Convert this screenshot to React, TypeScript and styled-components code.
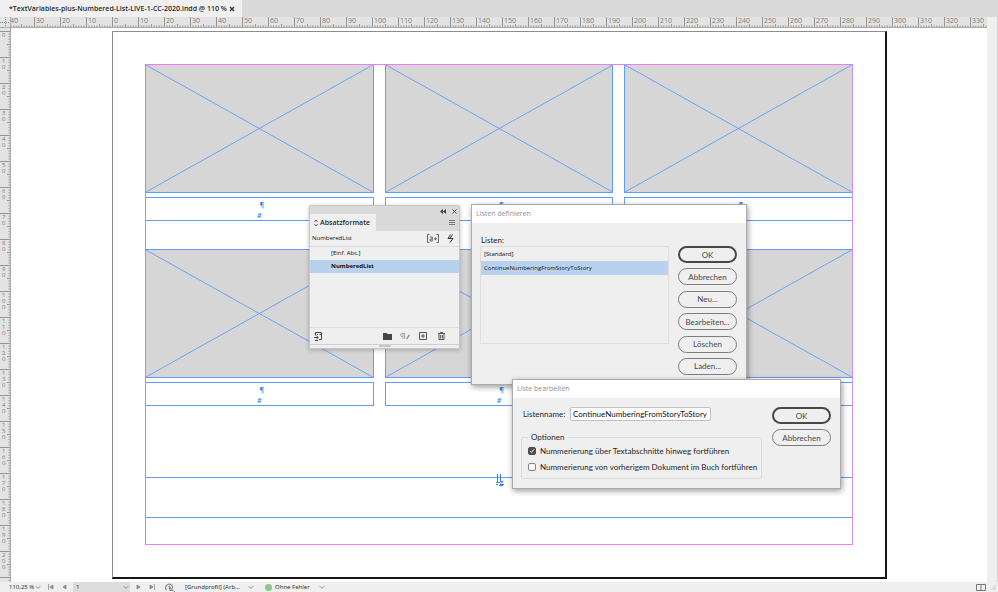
import React, { useId, useState } from "react";
import styled, { createGlobalStyle, css } from "styled-components";

const dialogFont = 'Lato, "Noto Sans", sans-serif';
const uiFont = '"Noto Sans", "Open Sans", sans-serif';
const chromeFont = '"Open Sans", "Noto Sans", sans-serif';
const frameBlue = "#5c9ffb";

const GlobalStyle = createGlobalStyle`
  *, *::before, *::after { box-sizing: border-box; }
  html, body, #root { height: 100%; }
  body { margin: 0; overflow: hidden; background: #fff; font-family: ${uiFont}; color: #262626; }
  button, input, select { font: inherit; color: inherit; margin: 0; }
  button { padding: 0; border: 0; background: none; cursor: default; }
  svg { display: block; }
`;

/* ---------- Application frame ---------- */

const Window = styled.div`
  display: grid;
  grid-template-rows: 17px minmax(0, 1fr) 10px;
  height: 100vh;
`;

const TabBar = styled.header`
  display: flex;
  background: #dadada;
`;

const DocumentTab = styled.div`
  display: flex;
  align-items: center;
  padding: 1px 5px 0 9px;
  background: #f0f0f0;
  font: 600 7px/14px ${chromeFont};
  white-space: nowrap;
`;

const IconButton = styled.button<{ $size?: number }>`
  display: grid;
  place-items: center;
  flex: none;
  width: ${(p) => p.$size ?? 10}px;
  height: ${(p) => p.$size ?? 10}px;
  color: #333;
`;

const Workspace = styled.div`
  display: grid;
  grid-template: 11px minmax(0, 1fr) / 11px minmax(0, 1fr) 11px;
  min-height: 0;
`;

const RulerCorner = styled.div`
  background: #e3e3e3;
  border-right: 1px solid #aaa;
  border-bottom: 1px solid #aaa;
`;

const HorizontalRuler = styled.div`
  display: flex;
  overflow: hidden;
  background: #e3e3e3;
  border-bottom: 1px solid #aaa;
  & > :first-child { margin-left: -3px; }
`;

const VerticalRuler = styled.div`
  display: flex;
  flex-direction: column;
  overflow: hidden;
  padding-top: 3px;
  background: #e3e3e3;
  border-right: 1px solid #aaa;
`;

const RulerCell = styled.div<{ $vertical?: boolean }>`
  display: grid;
  flex: none;
  color: #7d7d7d;
  font: 7px/8px ${chromeFont};
  & > * { grid-area: 1 / 1; }
  ${(p) => (p.$vertical ? css`width: 10px; height: 26px;` : css`width: 26px; height: 10px;`)}
`;

const RulerLabel = styled.span<{ $vertical?: boolean }>`
  ${(p) =>
    p.$vertical
      ? css`width: 6px; padding: 1px 0 0 2px; font-size: 6px; line-height: 6px; word-break: break-all;`
      : css`padding-left: 2px;`}
`;

const Scrollbar = styled.div`
  grid-column: 3;
  grid-row: 1 / 3;
  background: #efefef;
  border-right: 1px solid #d4d4d4;
`;

const Canvas = styled.main`
  position: relative;
  overflow: hidden;
  background: #fff;
`;

/* ---------- Document page ---------- */

const Sheet = styled.section`
  width: 775px;
  height: 548px;
  margin: 3px 0 0 101px;
  padding: 32px 32px 0;
  border: solid #8e8e8e;
  border-width: 1px 2px 2px 1px;
  border-right-color: #161616;
  border-bottom-color: #161616;
`;

const Margins = styled.div`
  position: relative;
  height: 481px;
  &::after {
    content: "";
    position: absolute;
    inset: 0;
    border: 1px solid #f07cf0;
    border-left-color: #bf80ff;
    border-right-color: #cf8dff;
    pointer-events: none;
  }
`;

const FrameGrid = styled.div`
  display: grid;
  grid-template-columns: repeat(3, 1fr);
  gap: 28px 11px;
`;

const FrameGroup = styled.figure`
  display: grid;
  gap: 4px;
  margin: 0;
`;

const PictureFrame = styled.div`
  height: 129px;
  background: #d6d6d6;
  border: 1px solid ${frameBlue};
  & > svg { width: 100%; height: 100%; }
`;

const CaptionFrame = styled.figcaption`
  height: 24px;
  padding-top: 1px;
  border: 1px solid ${frameBlue};
  color: #2f83f3;
  font: 600 7px/11px ${chromeFont};
  text-align: center;
`;

const Pilcrow = styled.div`
  padding-left: 5px;
`;

const NumberMark = styled.div`
  font-style: italic;
`;

const StoryFrame = styled.div`
  display: grid;
  justify-content: center;
  height: 41px;
  margin-top: 71px;
  border: 1px solid ${frameBlue};
`;

const AnchorMark = styled.svg`
  margin-top: -4px;
`;

/* ---------- Floating windows ---------- */

const FloatingWindow = styled.section<{ $x: number; $y: number; $width: number }>`
  position: absolute;
  left: ${(p) => p.$x}px;
  top: ${(p) => p.$y}px;
  width: ${(p) => p.$width}px;
  background: #efefef;
`;

const Panel = styled(FloatingWindow)`
  border: 1px solid #c6c6c6;
  border-radius: 2px 2px 0 0;
  box-shadow: 0 1px 4px rgba(0, 0, 0, 0.25);
  color: #111;
  font: 6px/13px ${chromeFont};
`;

const PanelTop = styled.div`
  display: flex;
  justify-content: flex-end;
  gap: 1px;
  height: 8px;
  background: #dadada;
`;

const PanelTabs = styled.div`
  display: flex;
  align-items: center;
  justify-content: space-between;
  height: 17px;
  padding-right: 2px;
  background: #dadada;
`;

const PanelTab = styled.div`
  display: flex;
  align-items: center;
  gap: 2px;
  height: 100%;
  padding: 0 6px 0 4px;
  background: #efefef;
  color: #262626;
  font-size: 7px;
  font-weight: 600;
`;

const CurrentStyle = styled.div`
  display: flex;
  align-items: center;
  gap: 3px;
  height: 15px;
  padding: 0 2px;
  & > span { flex: 1; }
`;

const StyleList = styled.div`
  height: 82px;
  border: solid #dcdcdc;
  border-width: 1px 0;
`;

const StyleRow = styled.button<{ $selected?: boolean }>`
  display: block;
  width: 100%;
  height: 13px;
  padding-left: 21px;
  text-align: left;
  line-height: 13px;
  font-weight: ${(p) => (p.$selected ? 700 : 400)};
  background: ${(p) => (p.$selected ? "#b8d2ee" : "transparent")};
`;

const PanelFooter = styled.div`
  display: flex;
  align-items: center;
  gap: 8px;
  height: 16px;
  padding: 0 13px 0 3px;
  & > :first-child { margin-right: auto; }
`;

const Grip = styled.div`
  display: grid;
  justify-content: center;
  grid-template-columns: 12px;
  height: 4px;
  border-top: 1px solid #cfcfcf;
  &::after { content: ""; height: 2px; background: #c8c8c8; }
`;

const Dialog = styled(FloatingWindow)`
  border: 1px solid #ababab;
  box-shadow: 1px 2px 6px rgba(0, 0, 0, 0.4);
  font: 8px/12px ${dialogFont};
`;

const DialogTitle = styled.h2`
  margin: 0;
  padding-left: 4px;
  background: #fff;
  color: #929292;
  font: 400 7px/18px ${chromeFont};
`;

const DialogBody = styled.div<{ $pad: string }>`
  display: flex;
  justify-content: space-between;
  padding: ${(p) => p.$pad};
`;

const ButtonColumn = styled.div<{ $height: number }>`
  display: flex;
  flex-direction: column;
  justify-content: space-between;
  height: ${(p) => p.$height}px;
`;

const DefineButtons = styled(ButtonColumn)`
  margin-top: 12px;
`;

const PillButton = styled.button<{ $primary?: boolean }>`
  width: 59px;
  height: 17px;
  border-radius: 9px;
  border: ${(p) => (p.$primary ? "2px solid #484848" : "1px solid #7c7c7c")};
  color: #484848;
  line-height: 12px;
  text-align: center;
`;

const ListLabel = styled.div`
  padding-left: 1px;
`;

const ListBox = styled.div`
  width: 189px;
  height: 98px;
  border: 1px solid #dedede;
`;

const ListRow = styled.button<{ $selected?: boolean }>`
  display: block;
  width: 100%;
  height: 14px;
  padding-left: 3px;
  text-align: left;
  font: 6px/14px ${chromeFont};
  color: #111;
  background: ${(p) => (p.$selected ? "#b8d2ee" : "transparent")};
`;

const FieldRow = styled.div`
  display: flex;
  align-items: center;
  gap: 4px;
  padding-left: 2px;
  & > label { width: 43px; }
`;

const TextInput = styled.input`
  width: 141px;
  height: 14px;
  padding: 0 2px;
  border: 1px solid #c2c2c2;
  border-radius: 2px;
  background: #fff;
  color: #111;
  outline: none;
`;

const OptionGroup = styled.fieldset`
  width: 241px;
  height: 48px;
  margin: 10px 0 0;
  padding: 0 0 0 6px;
  border: 1px solid #dcdcdc;
  border-radius: 2px;
  & > legend { padding: 0 3px; line-height: 12px; }
`;

const CheckLabel = styled.label`
  display: flex;
  align-items: center;
  gap: 4px;
  height: 16px;
  line-height: 12px;
  white-space: nowrap;
`;

const CheckBox = styled.input`
  appearance: none;
  width: 8px;
  height: 8px;
  border: 1px solid #858585;
  border-radius: 2px;
  background: #fafafa;
  &:checked {
    border-color: #4f4f4f;
    background: #4f4f4f
      url("data:image/svg+xml,%3Csvg xmlns='http://www.w3.org/2000/svg' viewBox='0 0 6 6'%3E%3Cpath d='M1 3l1.5 1.5L5 1.3' fill='none' stroke='white'/%3E%3C/svg%3E")
      center / 6px 6px;
  }
`;

/* ---------- Status bar ---------- */

const StatusBar = styled.footer`
  display: flex;
  align-items: center;
  gap: 5px;
  padding-left: 9px;
  background: #efefef;
  font: 6px/10px ${uiFont};
  color: #333;
`;

const Picker = styled.div<{ $width: number; $filled?: boolean }>`
  display: grid;
  grid-template-columns: minmax(0, 1fr) 7px;
  align-items: center;
  width: ${(p) => p.$width}px;
  height: 10px;
  background: ${(p) => (p.$filled ? "#dcdcdc" : "transparent")};
  & > select {
    grid-area: 1 / 1 / 2 / 3;
    appearance: none;
    width: 100%;
    height: 10px;
    padding: 0 0 0 ${(p) => (p.$filled ? 3 : 0)}px;
    border: 0;
    background: none;
    outline: none;
  }
  & > svg { grid-area: 1 / 2; pointer-events: none; }
`;

const StatusGroup = styled.div`
  display: flex;
  align-items: center;
  gap: 10px;
  padding-left: 4px;
`;

const PreflightStatus = styled.div`
  display: flex;
  align-items: center;
  gap: 3px;
`;

const PreflightDot = styled.span`
  width: 7px;
  height: 7px;
  border-radius: 50%;
  background: #86ca86;
`;

const StatusEnd = styled.div`
  display: flex;
  align-items: center;
  gap: 2px;
  margin-left: auto;
`;

/* ---------- Drawings ---------- */

const Chevron = () => (
  <svg width="6" height="5" viewBox="0 0 6 5" fill="none" stroke="#8a8a8a">
    <path d="M.8 1.2 3 3.4l2.2-2.2" />
  </svg>
);

const Cross = () => (
  <svg width="6" height="6" viewBox="0 0 6 6" stroke="currentColor" strokeWidth="1.4">
    <path d="M1 1l4 4M5 1L1 5" />
  </svg>
);

const StepIcon = ({ back, edge }: { back?: boolean; edge?: boolean }) => (
  <svg width="6" height="6" viewBox="0 0 6 6" fill="#888" stroke="#888" strokeWidth="0.8">
    {back ? <path d="M5 1v4L2 3z" /> : <path d="M1 1v4l3-2z" />}
    {edge && <path d={back ? "M.6 0v6" : "M5.4 0v6"} />}
  </svg>
);

const Ticks = ({ vertical }: { vertical?: boolean }) => {
  const marks = Array.from({ length: 10 }, (_, i) => {
    const at = (i * 2.6 + 0.5).toFixed(1);
    const from = i === 0 ? 0 : i === 5 ? 7 : 8.5;
    return vertical ? `M${from} ${at}H10` : `M${at} ${from}V10`;
  }).join("");
  return (
    <svg width={vertical ? 10 : 26} height={vertical ? 26 : 10} stroke="#8c8c8c" strokeWidth="0.9">
      <path d={marks} />
    </svg>
  );
};

const Diagonals = () => (
  <svg viewBox="0 0 227 127" preserveAspectRatio="none" stroke={frameBlue} strokeWidth="0.9">
    <path d="M0 0 227 127M227 0 0 127" />
  </svg>
);

const horizontalMarks = [40, 30, 20, 10, ...Array.from({ length: 34 }, (_, i) => i * 10)];
const verticalMarks = Array.from({ length: 21 }, (_, i) => i * 10);

/* ---------- Parts ---------- */

const PageFrame = () => (
  <FrameGroup>
    <PictureFrame><Diagonals /></PictureFrame>
    <CaptionFrame>
      <Pilcrow>¶</Pilcrow>
      <NumberMark>#</NumberMark>
    </CaptionFrame>
  </FrameGroup>
);

const ParagraphStyles = () => {
  const [selected, setSelected] = useState("NumberedList");
  return (
    <Panel $x={298} $y={177} $width={151} aria-label="Absatzformate">
      <PanelTop>
        <IconButton aria-label="Reduzieren">
          <svg width="6" height="5" viewBox="0 0 6 5" fill="#444"><path d="M3 0v5L0 2.500zM6 0v5L3 2.500z" /></svg>
        </IconButton>
        <IconButton aria-label="Schließen">
          <svg width="5" height="5" viewBox="0 0 5 5" stroke="#444"><path d="M.5.5l4 4M4.500.5l-4 4" /></svg>
        </IconButton>
      </PanelTop>
      <PanelTabs>
        <PanelTab>
          <svg width="4" height="8" viewBox="0 0 4 8" fill="none" stroke="#444" strokeWidth="0.8"><path d="M.5 3 2 1l1.500 2M.5 5 2 7l1.500-2" /></svg>
          Absatzformate
        </PanelTab>
        <IconButton aria-label="Menü">
          <svg width="6" height="5" viewBox="0 0 6 5" stroke="#777"><path d="M0 .5h6M0 2.500h6M0 4.500h6" /></svg>
        </IconButton>
      </PanelTabs>
      <CurrentStyle>
        <span>{selected}</span>
        <IconButton $size={14} aria-label="Abweichungen anzeigen">
          <svg width="12" height="9" viewBox="0 0 12 9" fill="none" stroke="#555" strokeWidth="0.9">
            <path d="M2.500.5h-2v8h2M9.500.5h2v8h-2M3 3h2.300v4H3.200V5h2.100M7 4.800h3M8.500 3.300v3" />
          </svg>
        </IconButton>
        <IconButton $size={14} aria-label="Schnell anwenden">
          <svg width="7" height="9" viewBox="0 0 7 9" fill="none" stroke="#333"><path d="M3.500.5 1 4.500h5L3 8.500M5.500.5 3 4.500" /></svg>
        </IconButton>
      </CurrentStyle>
      <StyleList>
        {["[Einf. Abs.]", "NumberedList"].map((name) => (
          <StyleRow key={name} $selected={name === selected} aria-pressed={name === selected} onClick={() => setSelected(name)}>
            {name}
          </StyleRow>
        ))}
      </StyleList>
      <PanelFooter>
        <IconButton aria-label="Bibliothek">
          <svg width="9" height="9" viewBox="0 0 9 9" fill="none" stroke="#444">
            <path d="M1.500 3.500v-3h6v7H5M0 5.500h4M2.500 3.800l1.800 1.700-1.800 1.700M5.500 2.500h2M3 2.500h1M1 8.500h3" />
          </svg>
        </IconButton>
        <IconButton aria-label="Neue Gruppe">
          <svg width="9" height="7" viewBox="0 0 9 7" fill="#444"><path d="M0 0h3.500l1 1H9v6H0z" /></svg>
        </IconButton>
        <IconButton aria-label="Abweichungen löschen">
          <svg width="10" height="7" viewBox="0 0 10 7" fill="none" stroke="#999" strokeWidth="0.8">
            <path d="M5 .5H2Q.5.5.5 2T2 3.500h1M3 .5V6M4.600 .5V6" /><path d="M6.500 6 9.500 2" strokeWidth="1.500" />
          </svg>
        </IconButton>
        <IconButton aria-label="Neues Format">
          <svg width="8" height="8" viewBox="0 0 8 8" fill="none" stroke="#555"><path d="M.5.5h7v7h-7zM2 4h4M4 2v4" /></svg>
        </IconButton>
        <IconButton aria-label="Löschen">
          <svg width="7" height="8" viewBox="0 0 7 8" fill="none" stroke="#444" strokeWidth="0.9">
            <path d="M0 1.500h7M2.500 1.500v-1h2v1M1 2v5.500h5V2M2.700 3v3.500M4.300 3v3.500" />
          </svg>
        </IconButton>
      </PanelFooter>
      <Grip />
    </Panel>
  );
};

const DefineLists = () => {
  const [selected, setSelected] = useState("ContinueNumberingFromStoryToStory");
  return (
    <Dialog $x={460} $y={176} $width={276} role="dialog" aria-label="Listen definieren">
      <DialogTitle>Listen definieren</DialogTitle>
      <DialogBody $pad="11px 9px 9px 8px">
        <div>
          <ListLabel>Listen:</ListLabel>
          <ListBox>
            {["[Standard]", "ContinueNumberingFromStoryToStory"].map((name) => (
              <ListRow key={name} $selected={name === selected} aria-pressed={name === selected} onClick={() => setSelected(name)}>
                {name}
              </ListRow>
            ))}
          </ListBox>
        </div>
        <DefineButtons $height={129}>
          <PillButton $primary>OK</PillButton>
          {["Abbrechen", "Neu...", "Bearbeiten...", "Löschen", "Laden..."].map((name) => (
            <PillButton key={name}>{name}</PillButton>
          ))}
        </DefineButtons>
      </DialogBody>
    </Dialog>
  );
};

const EditList = () => {
  const nameId = useId();
  return (
    <Dialog $x={501} $y={351} $width={329} role="dialog" aria-label="Liste bearbeiten">
      <DialogTitle>Liste bearbeiten</DialogTitle>
      <DialogBody $pad="9px 9px 9px 8px">
        <div>
          <FieldRow>
            <label htmlFor={nameId}>Listenname:</label>
            <TextInput id={nameId} defaultValue="ContinueNumberingFromStoryToStory" />
          </FieldRow>
          <OptionGroup>
            <legend>Optionen</legend>
            <CheckLabel>
              <CheckBox type="checkbox" defaultChecked />
              Nummerierung über Textabschnitte hinweg fortführen
            </CheckLabel>
            <CheckLabel>
              <CheckBox type="checkbox" />
              Nummerierung von vorherigem Dokument im Buch fortführen
            </CheckLabel>
          </OptionGroup>
        </div>
        <ButtonColumn $height={39}>
          <PillButton $primary>OK</PillButton>
          <PillButton>Abbrechen</PillButton>
        </ButtonColumn>
      </DialogBody>
    </Dialog>
  );
};

const StatusPicker = ({ label, value, width, filled }: { label: string; value: string; width: number; filled?: boolean }) => (
  <Picker $width={width} $filled={filled}>
    <select aria-label={label}><option>{value}</option></select>
    <Chevron />
  </Picker>
);

export default function App() {
  return (
    <>
      <GlobalStyle />
      <Window>
        <TabBar>
          <DocumentTab>
            *TextVariables-plus-Numbered-List-LIVE-1-CC-2020.indd @ 110 %
            <IconButton aria-label="Dokument schließen"><Cross /></IconButton>
          </DocumentTab>
        </TabBar>
        <Workspace>
          <RulerCorner>
            <svg width="10" height="10" stroke="#8c8c8c" strokeDasharray="1 1"><path d="M5.500 0v10M0 5.500h10" /></svg>
          </RulerCorner>
          <HorizontalRuler>
            {horizontalMarks.map((mark, i) => (
              <RulerCell key={i}>
                <Ticks />
                <RulerLabel>{mark}</RulerLabel>
              </RulerCell>
            ))}
          </HorizontalRuler>
          <Scrollbar />
          <VerticalRuler>
            {verticalMarks.map((mark) => (
              <RulerCell key={mark} $vertical>
                <Ticks vertical />
                <RulerLabel $vertical>{mark}</RulerLabel>
              </RulerCell>
            ))}
            <RulerCell $vertical><Ticks vertical /></RulerCell>
          </VerticalRuler>
          <Canvas>
            <Sheet>
              <Margins>
                <FrameGrid>
                  {Array.from({ length: 6 }, (_, i) => <PageFrame key={i} />)}
                </FrameGrid>
                <StoryFrame>
                  <AnchorMark width="9" height="12" viewBox="0 0 9 12" fill="none" stroke="#2f83f3">
                    <path d="M2.500 0v9M5.500 0v8M1 8.500h4M4 11.500h4M5 7.500h3L5 10.500h4M1 10.500h2" />
                  </AnchorMark>
                </StoryFrame>
              </Margins>
            </Sheet>
            <ParagraphStyles />
            <DefineLists />
            <EditList />
          </Canvas>
        </Workspace>
        <StatusBar>
          <StatusPicker label="Zoomfaktor" value="110,25 %" width={33} />
          <IconButton $size={8} aria-label="Erste Seite"><StepIcon back edge /></IconButton>
          <IconButton $size={8} aria-label="Vorherige Seite"><StepIcon back /></IconButton>
          <StatusPicker label="Seite" value="1" width={57} filled />
          <IconButton $size={8} aria-label="Nächste Seite"><StepIcon /></IconButton>
          <IconButton $size={8} aria-label="Letzte Seite"><StepIcon edge /></IconButton>
          <StatusGroup>
            <IconButton aria-label="Öffnen">
              <svg width="10" height="9" viewBox="0 0 10 9" fill="none" stroke="#888" strokeWidth="1.200">
                <path d="M1.500 7A3.500 3.500 0 1 1 7.500 5.500M4 3l3.500 4.500H5z" /><path d="M9.400 8v1" />
              </svg>
            </IconButton>
            <StatusPicker label="Preflight-Profil" value="[Grundprofil] (Arb..." width={70} />
            <PreflightStatus>
              <PreflightDot />
              <StatusPicker label="Preflight" value="Ohne Fehler" width={51} />
            </PreflightStatus>
          </StatusGroup>
          <StatusEnd>
            <IconButton aria-label="Layoutansicht teilen">
              <svg width="10" height="7" viewBox="0 0 10 7" fill="none" stroke="#777"><path d="M.5.5h9v6h-9zM5 0v7" /></svg>
            </IconButton>
            <svg width="10" height="10" viewBox="0 0 10 10" fill="#dcdcdc"><path d="M8 2v6H2z" /></svg>
          </StatusEnd>
        </StatusBar>
      </Window>
    </>
  );
}
